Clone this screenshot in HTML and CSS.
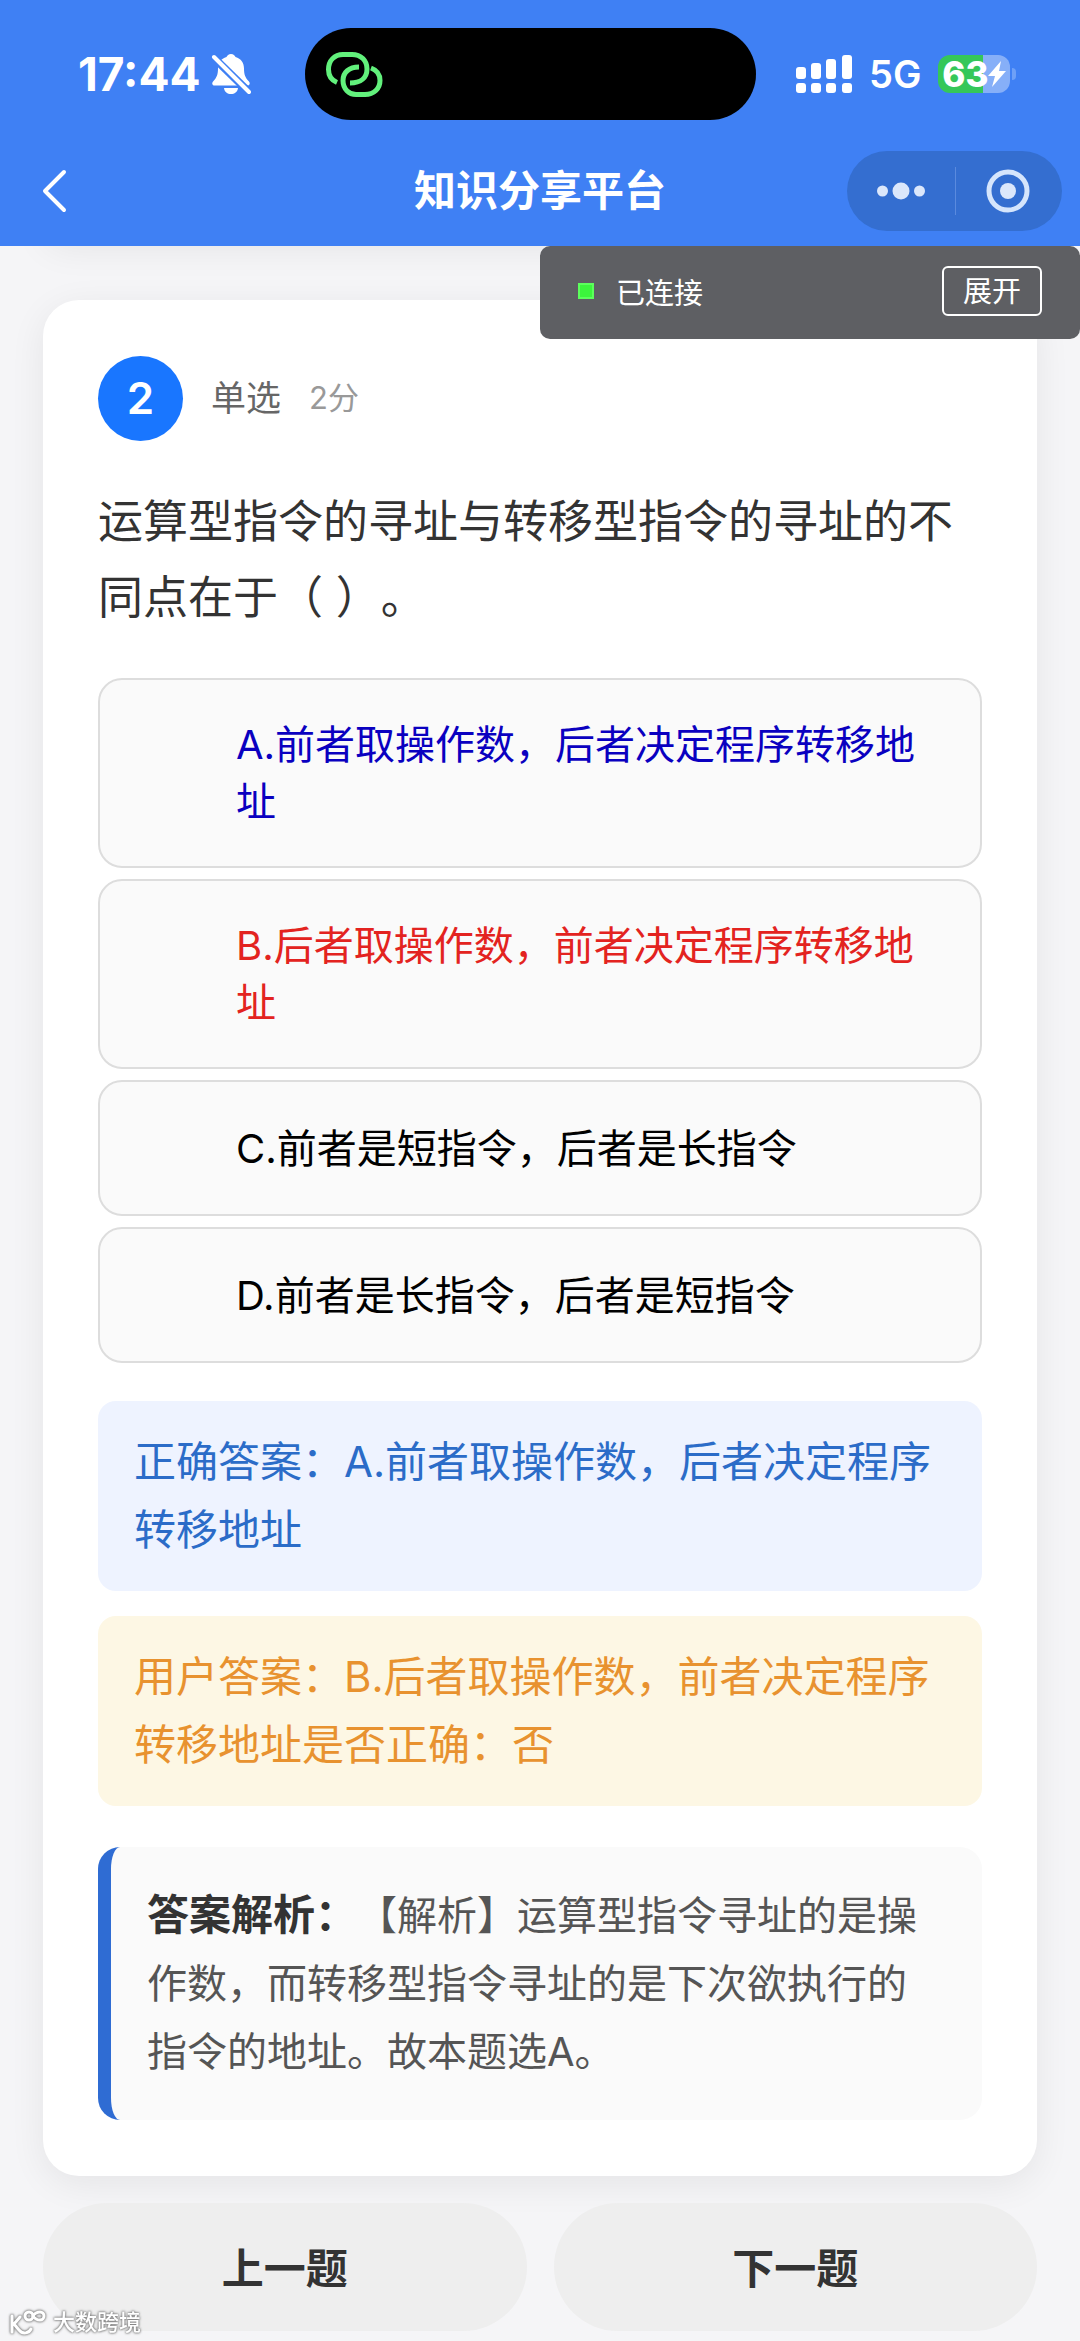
FILE: index.html
```html
<!DOCTYPE html>
<html lang="zh-CN">
<head>
<meta charset="utf-8">
<meta name="viewport" content="width=device-width">
<title>知识分享平台</title>
<link rel="stylesheet" href="styles.css">
</head>
<body>
<header class="header">
  <div class="status">
    <div class="status-left">
      <span class="time">17:44</span>
      <svg width="40" height="42" viewBox="0 0 40 42" aria-hidden="true">
        <path fill="#fff" d="M20 1c-2.300 0-4 1.500-4.500 3C10 5.500 7 10 7 15.500c0 6-1.300 9-4.500 12.500-2 2-1.500 4.500 1 4.500h33c2.500 0 3-2.500 1-4.500-3.200-3.500-4.500-6.500-4.500-12.500C33 10 30 5.500 24.500 4 24 2.500 22.300 1 20 1zM13 35h14c-.5 4-3.500 6-7 6s-6.500-2-7-6z"/>
        <path d="M0 2l40 39" stroke="#3f80f4" stroke-width="8"/>
        <path d="M3 4l35 35" stroke="#fff" stroke-width="4" stroke-linecap="round"/>
      </svg>
    </div>
    <div class="island">
      <svg width="58" height="46" viewBox="0 0 58 46" fill="none" stroke="#62f17c" stroke-width="5" aria-hidden="true">
        <path d="M12 31.500C6 29 3.500 24 3.500 18.500 3.500 9.500 9.500 3.500 18 3.500h9c9 0 15 6 15 14.500S36 32 25 32"/>
        <path d="M34 16c-10 0-16 5.500-16 13.500C18 38 24 43.500 31 43.500h9c9 0 15-6 15-14 0-6-3.500-10.500-9-12.500"/>
      </svg>
    </div>
    <div class="status-right">
      <svg width="56" height="38" viewBox="0 0 56 38" fill="#fff" aria-hidden="true">
        <rect x="0" y="12" width="10" height="12" rx="3"/><rect x="15" y="8" width="10" height="16" rx="3"/><rect x="30" y="4" width="10" height="20" rx="3"/><rect x="46" y="0" width="10" height="24" rx="3"/>
        <rect x="0" y="28" width="10" height="10" rx="3"/><rect x="15" y="28" width="10" height="10" rx="3"/><rect x="30" y="28" width="10" height="10" rx="3"/><rect x="46" y="28" width="10" height="10" rx="3"/>
      </svg>
      <span class="net">5G</span>
      <div class="battery">
        <span>63</span>
        <svg width="18" height="26" viewBox="0 0 18 26" aria-hidden="true"><path fill="#fff" d="M13 0L0 15h7L4 26 18 10h-7z"/></svg>
      </div>
    </div>
  </div>
  <nav class="nav">
    <button class="back" type="button" aria-label="返回">
      <svg width="26" height="44" viewBox="0 0 26 44" fill="none" stroke="#fff" stroke-width="4" stroke-linecap="round" stroke-linejoin="round"><path d="M22 3L3 22l19 19"/></svg>
    </button>
    <h1 class="title">知识分享平台</h1>
    <div class="capsule">
      <button type="button" aria-label="更多">
        <svg width="48" height="18" viewBox="0 0 48 18" fill="#dbe7fb"><circle cx="5.500" cy="9" r="5.500"/><circle cx="24" cy="9" r="8.500"/><circle cx="42.500" cy="9" r="5.500"/></svg>
      </button>
      <button type="button" aria-label="关闭">
        <svg width="44" height="44" viewBox="0 0 44 44"><circle cx="22" cy="22" r="19" fill="none" stroke="#d5e5fc" stroke-width="5"/><circle cx="22" cy="22" r="8" fill="#dbe7fb"/></svg>
      </button>
    </div>
  </nav>
  <div class="toast" role="status">
    <span class="dot"></span>
    <span class="toast-text">已连接</span>
    <button class="expand" type="button">展开</button>
  </div>
</header>

<main class="page">
  <div class="card card-prev"></div>
  <article class="card question-card">
    <div class="meta">
      <span class="number">2</span>
      <span class="kind">单选</span>
      <span class="score">2分</span>
    </div>
    <p class="question">运算型指令的寻址与转移型指令的寻址的不同点在于（ ）。</p>
    <ul class="options">
      <li class="option is-correct">A.前者取操作数，后者决定程序转移地址</li>
      <li class="option is-wrong">B.后者取操作数，前者决定程序转移地址</li>
      <li class="option">C.前者是短指令，后者是长指令</li>
      <li class="option">D.前者是长指令，后者是短指令</li>
    </ul>
    <p class="answer answer-right">正确答案：A.前者取操作数，后者决定程序转移地址</p>
    <p class="answer answer-user">用户答案：B.后者取操作数，前者决定程序转移地址是否正确：否</p>
    <p class="analysis"><strong>答案解析：</strong>【解析】运算型指令寻址的是操作数，而转移型指令寻址的是下次欲执行的指令的地址。故本题选A。</p>
  </article>
  <div class="pager">
    <button type="button">上一题</button>
    <button type="button">下一题</button>
  </div>
</main>

<div class="watermark">
  <svg width="40" height="28" viewBox="0 0 40 28" fill="none" stroke="#fff" stroke-width="3" stroke-linecap="round" aria-hidden="true">
    <path d="M3 8v16M11 9l-6 7 5 6c4 5 10 3 12-1"/><circle cx="20" cy="8" r="4"/><path d="M24 8c2-3 4-4 7-4a4 4 0 010 8c-3 0-5-1-7-4z"/>
  </svg>
  <span>大数跨境</span>
</div>
</body>
</html>
```
FILE: styles.css
```css
* { box-sizing: border-box; margin: 0; padding: 0; }

body {
  background: #f5f5f7;
  color: #333;
  font-family: Inter, "Noto Sans CJK SC", sans-serif;
  font-size: 40px;
  text-spacing-trim: space-all;
}

button { border: 0; background: none; color: inherit; font-family: inherit; }
svg { display: block; }

/* header */
.header {
  position: sticky;
  top: 0;
  z-index: 2;
  background: #3f80f4;
  color: #fff;
}
.status {
  display: grid;
  grid-template-columns: 305fr 451fr 324fr;
  padding: 28px 0 16px;
}
.status-left, .status-right { display: flex; align-items: center; }
.status-left { gap: 10px; padding-left: 78px; }
.time { font-size: 46px; font-weight: 700; }
.island {
  display: flex;
  align-items: center;
  height: 92px;
  padding-left: 20px;
  border-radius: 46px;
  background: #000;
}
.status-right { gap: 17px; padding-left: 40px; }
.net { font-size: 38px; font-weight: 600; }
.battery {
  position: relative;
  display: flex;
  align-items: center;
  justify-content: center;
  width: 72px;
  height: 38px;
  border-radius: 12px;
  background: linear-gradient(90deg, #35c759 63%, #86aff8 63%);
  font-size: 35px;
  font-weight: 800;
  line-height: 38px;
}
.battery::after {
  content: "";
  position: absolute;
  left: 74px;
  top: 13px;
  width: 4px;
  height: 12px;
  border-radius: 0 4px 4px 0;
  background: #6ea0f7;
}
.nav {
  display: grid;
  grid-template-columns: 1fr auto 1fr;
  align-items: center;
  height: 110px;
  padding: 0 18px;
}
.back { justify-self: start; padding-left: 24px; }
.title { font-size: 42px; font-weight: 700; line-height: 60px; }
.capsule {
  justify-self: end;
  display: grid;
  grid-template-columns: 1fr 1fr;
  width: 215px;
  height: 80px;
  border-radius: 40px;
  background: #346ed0;
}
.capsule button { display: grid; place-items: center; position: relative; }
.capsule button + button::before {
  content: "";
  position: absolute;
  left: 0;
  top: 16px;
  width: 1px;
  height: 48px;
  background: #5a8ade;
}
.toast {
  position: absolute;
  top: 100%;
  right: 0;
  width: 50%;
  display: flex;
  align-items: center;
  padding: 20px 38px 23px;
  border-radius: 10px;
  background: #5e5f63;
}
.dot { width: 16px; height: 16px; background: #3cf53c; border: 2px solid #5cff5c; }
.toast-text { margin-left: 22px; padding-top: 6px; font-size: 29px; line-height: 40px; }
.expand {
  margin-left: auto;
  width: 100px;
  height: 50px;
  padding-top: 2px;
  border: 2px solid #fff;
  border-radius: 6px;
  font-size: 29px;
  line-height: 40px;
}

/* question card */
.page { padding: 0 43px 9px; }
.card {
  border-radius: 36px;
  background: #fff;
  box-shadow: 0 8px 36px rgba(0, 0, 0, 0.07);
}
.card-prev { height: 40px; margin-top: -46px; margin-bottom: 60px; }
.question-card { padding: 56px 55px; }
.meta { display: flex; align-items: center; height: 85px; }
.number {
  width: 85px;
  height: 85px;
  border-radius: 50%;
  background: #1976ff;
  color: #fff;
  font-size: 44px;
  font-weight: 600;
  line-height: 85px;
  text-align: center;
}
.kind { margin-left: 28px; color: #666; font-size: 35px; line-height: 50px; padding-bottom: 2px; }
.score { margin-left: 28px; color: #999; font-size: 31px; line-height: 50px; padding-bottom: 2px; }
.question { margin-top: 43px; font-size: 45px; line-height: 76px; }
.options { display: grid; gap: 11px; margin-top: 42px; list-style: none; }
.option {
  min-height: 136px;
  padding: 36px 40px 36px 136px;
  border: 2px solid #ddd;
  border-radius: 24px;
  background: #fafafa;
  color: #000;
  line-height: 57px;
  align-content: center;
}
.is-correct { color: #0a00c0; }
.is-wrong { color: #e32320; }
.answer {
  padding: 27px 36px;
  border-radius: 18px;
  font-size: 42px;
  line-height: 68px;
}
.answer-right { margin-top: 38px; background: #eef3ff; color: #2b6cc8; }
.answer-user { margin-top: 25px; background: #fdf7e4; color: #e8922f; }
.analysis {
  margin-top: 41px;
  padding: 34px 36px;
  border-left: 13px solid #2f6cd3;
  border-radius: 22px;
  background: #fafafa;
  color: #555;
  line-height: 68px;
}
.analysis strong { color: #333; font-size: 42px; }

.pager {
  position: relative;
  display: grid;
  grid-template-columns: 1fr 1fr;
  gap: 27px;
  margin-top: 27px;
}
.pager button {
  height: 128px;
  padding-bottom: 4px;
  border-radius: 64px;
  background: #eee;
  color: #333;
  font-size: 42px;
  font-weight: 600;
}

.watermark {
  position: absolute;
  left: 9px;
  top: 2304px;
  z-index: 3;
  display: flex;
  align-items: center;
  gap: 4px;
  color: #fff;
  font-size: 22px;
  font-weight: 500;
  line-height: 36px;
  filter: drop-shadow(0 0 1px #777) drop-shadow(0 0 1px #999);
}
```
